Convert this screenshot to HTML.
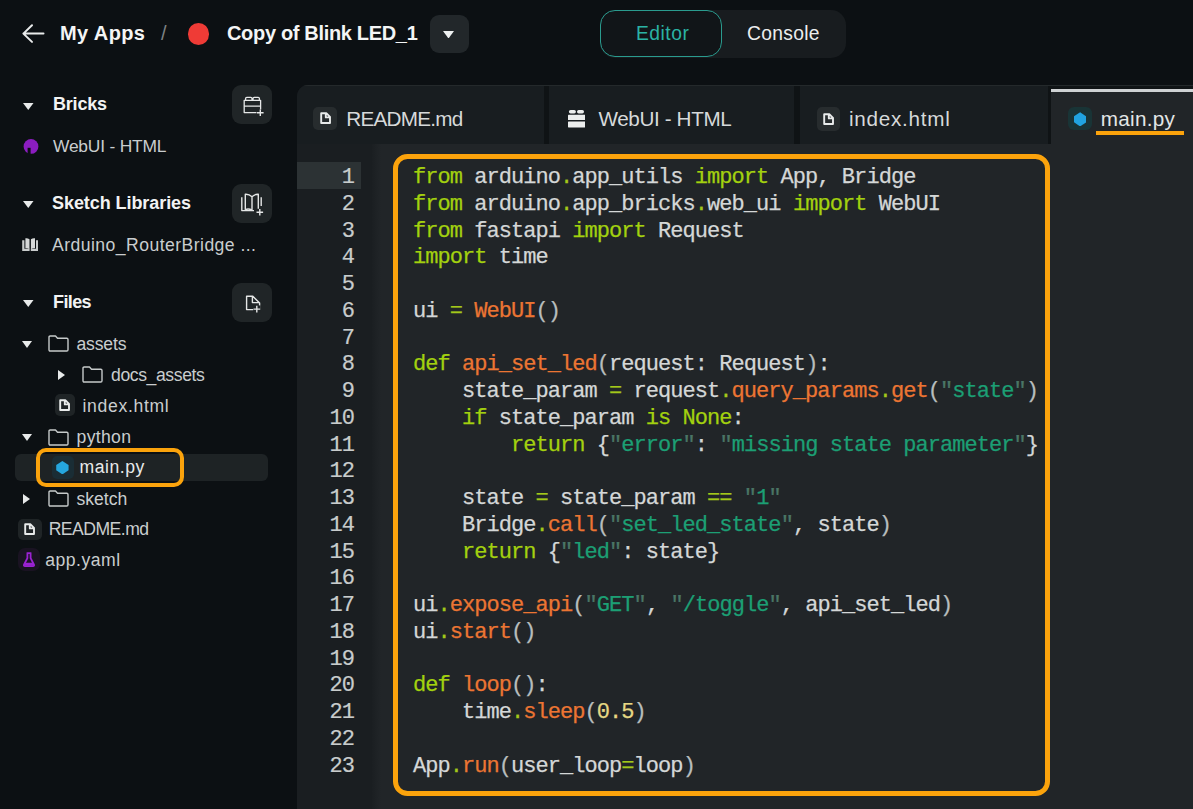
<!DOCTYPE html>
<html><head><meta charset="utf-8">
<style>
*{margin:0;padding:0;box-sizing:border-box}
html,body{width:1193px;height:809px;overflow:hidden;background:#0c1013;font-family:"Liberation Sans",sans-serif;position:relative}
.a{position:absolute;white-space:nowrap}
.btn{position:absolute;width:40px;height:39px;border-radius:9px;background:#202527}
#ed{position:absolute;left:297px;top:85px;width:896px;height:724px;background:#0f1315;border-top-left-radius:11px;overflow:hidden}
.tab{position:absolute;top:0;height:60px;background:#181d20}
#gut{position:absolute;left:0;top:59px;width:75px;bottom:0;background:#1a1e21}
#code{position:absolute;left:75px;top:59px;right:0;bottom:0;background:#212528}
#nums{position:absolute;left:0;top:80px;width:57px;text-align:right;font-family:"Liberation Mono",monospace;font-size:22px;line-height:26.75px;letter-spacing:-0.95px;color:#c8cccc;white-space:pre;-webkit-text-stroke:0.2px currentColor}
#codetxt{position:absolute;left:116px;top:80px;font-family:"Liberation Mono",monospace;font-size:22px;line-height:26.75px;letter-spacing:-0.95px;color:#d4d7d7;white-space:pre;-webkit-text-stroke:0.25px currentColor}
.k{color:#a3d10f}
.f{color:#ec7533}
.s{color:#1c9f74}
.n{color:#e7d884}
.p{color:#b7bdbd}
.o{color:#a3c81a}
.qt{color:#4a7565}
</style></head><body>
<svg class="a" style="left:21px;top:23px" width="24" height="21" viewBox="0 0 24 21"><path d="M22.5 10.6H2.4M11 2.3L2.4 10.6L11 18.9" fill="none" stroke="#e9ebeb" stroke-width="2" stroke-linecap="round" stroke-linejoin="round"/></svg>
<div class="a" style="left:60px;top:22.67px;font-size:20px;line-height:20px;color:#f4f5f5;font-weight:bold;letter-spacing:0.4px;">My Apps</div>
<div class="a" style="left:161px;top:22.67px;font-size:20px;line-height:20px;color:#7d8284;font-weight:normal;letter-spacing:0px;">/</div>
<div class="a" style="left:187.5px;top:23px;width:21.5px;height:21.5px;border-radius:50%;background:#ef3b36"></div>
<div class="a" style="left:227px;top:22.67px;font-size:20px;line-height:20px;color:#f4f5f5;font-weight:bold;letter-spacing:-0.33px;">Copy of Blink LED_1</div>
<div class="a" style="left:430px;top:15px;width:39px;height:38px;border-radius:9px;background:#22272a"></div>
<svg class="a" style="left:443px;top:30.5px" width="11" height="7.5" viewBox="0 0 11 7.5"><path d="M0 0H11L5.5 7.5Z" fill="#eef0f0"/></svg>
<div class="a" style="left:600px;top:10px;width:246px;height:48px;border-radius:15px;background:#181c1f"></div>
<div class="a" style="left:600px;top:10px;width:122px;height:47px;border-radius:15px;border:1.5px solid #2a9b8e;background:#111518"></div>
<div class="a" style="left:636px;top:24.26px;font-size:19.3px;line-height:19.3px;color:#2bb3a4;font-weight:normal;letter-spacing:0.5px;">Editor</div>
<div class="a" style="left:747px;top:24.46px;font-size:19.3px;line-height:19.3px;color:#eceeee;font-weight:normal;letter-spacing:0.3px;">Console</div>
<svg class="a" style="left:23px;top:102.5px" width="10.5" height="7" viewBox="0 0 10.5 7"><path d="M0 0H10.5L5.25 7Z" fill="#e8eaea"/></svg>
<div class="a" style="left:53px;top:95.26px;font-size:18px;line-height:18px;color:#f2f3f3;font-weight:bold;letter-spacing:-0.2px;">Bricks</div>
<div class="btn" style="left:231.5px;top:85px"></div>
<svg class="a" style="left:231.5px;top:85px" width="40" height="39" viewBox="0 0 40 39"><path d="M12.2 15.3H28.6V27.6H12.2Z M12.2 21.2H28.6 M13.6 15.3V13.6Q13.6 12.4 14.8 12.4H18.8Q20 12.4 20 13.6V15.3 M21 15.3V13.6Q21 12.4 22.2 12.4H26.2Q27.4 12.4 27.4 13.6V15.3" fill="none" stroke="#e6e8e8" stroke-width="1.3" stroke-linejoin="round"/><path d="M24.5 24.5H32.5V31.5H24.5Z" fill="#202527"/><path d="M28.3 24.5V31 M25 27.7H31.6" stroke="#e6e8e8" stroke-width="1.4"/></svg>
<svg class="a" style="left:23px;top:139px" width="16" height="15" viewBox="0 0 16 15"><circle cx="8" cy="7.4" r="7.4" fill="#8c1dc0"/><rect x="4.6" y="8.8" width="3" height="6.5" fill="#0c1013"/></svg>
<div class="a" style="left:53px;top:138.07px;font-size:17.4px;line-height:17.4px;color:#c9cdce;font-weight:normal;letter-spacing:-0.2px;">WebUI - HTML</div>
<svg class="a" style="left:23px;top:200.5px" width="10.5" height="7" viewBox="0 0 10.5 7"><path d="M0 0H10.5L5.25 7Z" fill="#e8eaea"/></svg>
<div class="a" style="left:52px;top:194.06px;font-size:18px;line-height:18px;color:#f2f3f3;font-weight:bold;letter-spacing:-0.07px;">Sketch Libraries</div>
<div class="btn" style="left:232px;top:184px"></div>
<svg class="a" style="left:232px;top:184px" width="40" height="40" viewBox="0 0 40 40"><path d="M9.8 13.2V26.6H20M29.2 13.2V22 M13.3 25.6V10.3Q17 10 20 12.8V26.4Q17 24.2 13.3 25.6Z M20 12.8Q23 10 26.3 10.3V24.8" fill="none" stroke="#e4e6e6" stroke-width="1.4" stroke-linejoin="round"/><path d="M20 26.6H22" stroke="#e4e6e6" stroke-width="1.4"/><path d="M27.8 25V31.6 M24.5 28.3H31.1" stroke="#e4e6e6" stroke-width="1.4"/></svg>
<svg class="a" style="left:21.7px;top:238.3px" width="16.4" height="13" viewBox="0 0 16 13"><path d="M0 2.2H2.2V10.8H7.4V13H0Z M16 2.2H13.8V10.8H8.6V13H16Z" fill="#c9cccc"/><path d="M3.2 0.3Q5.5 0 7.3 1.2V11.2Q5.5 10 3.2 10.3Z M8.7 1.2Q10.5 0 12.8 0.3V10.3Q10.5 10 8.7 11.2Z" fill="#d6d8d8"/></svg>
<div class="a" style="left:52px;top:237.40px;font-size:17.6px;line-height:17.6px;color:#c9cdce;font-weight:normal;letter-spacing:0.45px;">Arduino_RouterBridge ...</div>
<svg class="a" style="left:23px;top:299.5px" width="10.5" height="7" viewBox="0 0 10.5 7"><path d="M0 0H10.5L5.25 7Z" fill="#e8eaea"/></svg>
<div class="a" style="left:53px;top:293.36px;font-size:18px;line-height:18px;color:#f2f3f3;font-weight:bold;letter-spacing:-0.6px;">Files</div>
<div class="btn" style="left:231.6px;top:282.5px"></div>
<svg class="a" style="left:231.6px;top:282.5px" width="40" height="39" viewBox="0 0 40 39"><path d="M14.6 13.2H20.8L27.6 20V26.6H14.6Z M20.4 13.2V19.6H27.2" fill="none" stroke="#e4e6e6" stroke-width="1.4" stroke-linejoin="round"/><path d="M21.2 22.4H28.6V30H21.2Z" fill="#202527"/><path d="M24.8 22.8V29.4 M21.5 26.1H28.1" stroke="#e4e6e6" stroke-width="1.4"/></svg>
<svg class="a" style="left:22px;top:340.5px" width="10" height="7" viewBox="0 0 10 7"><path d="M0 0H10L5.0 7Z" fill="#e8eaea"/></svg>
<svg class="a" style="left:47.5px;top:335px" width="21" height="17" viewBox="0 0 21 17"><path d="M1 2.2Q1 1 2.2 1H7.5L9.5 3.2H18.8Q20 3.2 20 4.4V14.8Q20 16 18.8 16H2.2Q1 16 1 14.8Z" fill="none" stroke="#c6caca" stroke-width="1.4" stroke-linejoin="round"/></svg>
<div class="a" style="left:76.4px;top:335.50px;font-size:17.6px;line-height:17.6px;color:#c9cdce;font-weight:normal;letter-spacing:-0.15px;">assets</div>
<svg class="a" style="left:58px;top:370.2px" width="7" height="10" viewBox="0 0 7 10"><path d="M0 0V10L7 5.0Z" fill="#e8eaea"/></svg>
<svg class="a" style="left:81.5px;top:366px" width="21" height="17" viewBox="0 0 21 17"><path d="M1 2.2Q1 1 2.2 1H7.5L9.5 3.2H18.8Q20 3.2 20 4.4V14.8Q20 16 18.8 16H2.2Q1 16 1 14.8Z" fill="none" stroke="#c6caca" stroke-width="1.4" stroke-linejoin="round"/></svg>
<div class="a" style="left:111px;top:366.60px;font-size:17.6px;line-height:17.6px;color:#c9cdce;font-weight:normal;letter-spacing:-0.4px;">docs_assets</div>
<div class="a" style="left:54.8px;top:394.4px;width:20px;height:21.4px;border-radius:5px;background:#1f2426"></div>
<svg class="a" style="left:59.3px;top:399.1px" width="11" height="12" viewBox="0 0 11 12"><path d="M1.2 1.2H6.3L10 4.9V11H1.2Z M5.8 1.2V5.4H10" fill="none" stroke="#e9ebeb" stroke-width="1.9" stroke-linejoin="round"/></svg>
<div class="a" style="left:82.5px;top:397.70px;font-size:17.6px;line-height:17.6px;color:#c9cdce;font-weight:normal;letter-spacing:0.67px;">index.html</div>
<svg class="a" style="left:22px;top:433.5px" width="10" height="7" viewBox="0 0 10 7"><path d="M0 0H10L5.0 7Z" fill="#e8eaea"/></svg>
<svg class="a" style="left:47.5px;top:428.5px" width="21" height="17" viewBox="0 0 21 17"><path d="M1 2.2Q1 1 2.2 1H7.5L9.5 3.2H18.8Q20 3.2 20 4.4V14.8Q20 16 18.8 16H2.2Q1 16 1 14.8Z" fill="none" stroke="#c6caca" stroke-width="1.4" stroke-linejoin="round"/></svg>
<div class="a" style="left:76.6px;top:428.60px;font-size:17.6px;line-height:17.6px;color:#c9cdce;font-weight:normal;letter-spacing:0.3px;">python</div>
<div class="a" style="left:14.7px;top:454px;width:253.5px;height:27.4px;border-radius:6px;background:#1e2325"></div>
<div class="a" style="left:52px;top:456px;width:22px;height:23px;border-radius:5px;background:#1a2d35"></div>
<svg class="a" style="left:56px;top:460.8px" width="12.8" height="13.4" viewBox="0 0 12 13"><path d="M6 0L12 4V9L6 13L0 9V4Z" fill="#25a6de"/></svg>
<div class="a" style="left:79.6px;top:458.70px;font-size:17.6px;line-height:17.6px;color:#e8eaea;font-weight:normal;letter-spacing:0.53px;">main.py</div>
<div class="a" style="left:35.8px;top:447.8px;width:148px;height:39.5px;border-radius:10px;border:4px solid #fba30c"></div>
<svg class="a" style="left:23px;top:494px" width="7" height="10" viewBox="0 0 7 10"><path d="M0 0V10L7 5.0Z" fill="#e8eaea"/></svg>
<svg class="a" style="left:47.5px;top:490px" width="21" height="17" viewBox="0 0 21 17"><path d="M1 2.2Q1 1 2.2 1H7.5L9.5 3.2H18.8Q20 3.2 20 4.4V14.8Q20 16 18.8 16H2.2Q1 16 1 14.8Z" fill="none" stroke="#c6caca" stroke-width="1.4" stroke-linejoin="round"/></svg>
<div class="a" style="left:76.4px;top:490.60px;font-size:17.6px;line-height:17.6px;color:#c9cdce;font-weight:normal;letter-spacing:0px;">sketch</div>
<div class="a" style="left:18.2px;top:518.6px;width:23.5px;height:21.4px;border-radius:5px;background:#1f2426"></div>
<svg class="a" style="left:24.4px;top:523.3px" width="11" height="12" viewBox="0 0 11 12"><path d="M1.2 1.2H6.3L10 4.9V11H1.2Z M5.8 1.2V5.4H10" fill="none" stroke="#e9ebeb" stroke-width="1.9" stroke-linejoin="round"/></svg>
<div class="a" style="left:48.7px;top:521.10px;font-size:17.6px;line-height:17.6px;color:#c9cdce;font-weight:normal;letter-spacing:-0.53px;">README.md</div>
<div class="a" style="left:17.5px;top:548px;width:22px;height:23px;border-radius:7px;background:#1a1322"></div>
<svg class="a" style="left:23px;top:552.3px" width="12" height="15.3" viewBox="0 0 12 15"><path d="M3.6 1H8.4 M4.4 1V6L1 12.6Q0.6 14 2 14H10Q11.4 14 11 12.6L7.6 6V1" fill="none" stroke="#9a22d2" stroke-width="1.8" stroke-linejoin="round"/><path d="M2.2 10.5H9.8L11 13.6H1Z" fill="#9a22d2"/></svg>
<div class="a" style="left:45.2px;top:551.60px;font-size:17.6px;line-height:17.6px;color:#c9cdce;font-weight:normal;letter-spacing:0.51px;">app.yaml</div>
<div id="ed">
<div class="tab" style="left:0;width:247px"></div>
<div class="tab" style="left:252px;width:245px"></div>
<div class="tab" style="left:503px;width:248px"></div>
<div class="tab" style="left:754px;width:142px;background:#212528"></div>
<div class="a" style="left:0;top:0;width:896px;height:1px;background:#24292b"></div>
<div class="a" style="left:754px;top:1px;width:142px;height:3px;background:#101416"></div>
<div class="a" style="left:754px;top:4px;width:142px;height:3px;background:#cfd2d4"></div>
<div class="a" style="left:16.2px;top:21.5px;width:23.8px;height:23.8px;border-radius:5px;background:#272c2e"></div>
<svg class="a" style="left:22.6px;top:27.4px" width="11" height="12" viewBox="0 0 11 12"><path d="M1.2 1.2H6.3L10 4.9V11H1.2Z M5.8 1.2V5.4H10" fill="none" stroke="#e9ebeb" stroke-width="1.9" stroke-linejoin="round"/></svg>
<div class="a" style="left:49.2px;top:23.98px;font-size:20.7px;line-height:20.7px;color:#d6d9da;font-weight:normal;letter-spacing:-0.75px;">README.md</div>
<svg class="a" style="left:270.9px;top:25.3px" width="17.4" height="17.4" viewBox="0 0 17.4 17.4"><rect x="0.9" y="0" width="7" height="3.4" rx="1.7" fill="#eceeee"/><rect x="9" y="0" width="7" height="3.4" rx="1.7" fill="#eceeee"/><rect x="0" y="4.7" width="17.4" height="5.3" rx="0.6" fill="#eceeee"/><rect x="0" y="11.5" width="17.4" height="5.9" rx="0.6" fill="#eceeee"/></svg>
<div class="a" style="left:301.4px;top:23.98px;font-size:20.7px;line-height:20.7px;color:#d6d9da;font-weight:normal;letter-spacing:-0.38px;">WebUI - HTML</div>
<div class="a" style="left:519.5px;top:22px;width:23.5px;height:23.5px;border-radius:5px;background:#272c2e"></div>
<svg class="a" style="left:525.8px;top:27.8px" width="11" height="12" viewBox="0 0 11 12"><path d="M1.2 1.2H6.3L10 4.9V11H1.2Z M5.8 1.2V5.4H10" fill="none" stroke="#e9ebeb" stroke-width="1.9" stroke-linejoin="round"/></svg>
<div class="a" style="left:551.9px;top:23.98px;font-size:20.7px;line-height:20.7px;color:#d6d9da;font-weight:normal;letter-spacing:0.73px;">index.html</div>
<div class="a" style="left:771px;top:22.1px;width:23.7px;height:23.4px;border-radius:6px;background:#193436"></div>
<svg class="a" style="left:776.9px;top:26.5px" width="12.2" height="14.6" viewBox="0 0 12 14"><path d="M6 0L12 4V10L6 14L0 10V4Z" fill="#21a3e0"/></svg>
<div class="a" style="left:803.7px;top:23.98px;font-size:20.7px;line-height:20.7px;color:#e3e6e6;font-weight:normal;letter-spacing:0.3px;">main.py</div>
<div class="a" style="left:798.6px;top:46px;width:88px;height:3.5px;background:#fba30c"></div>
<div id="gut"></div>
<div id="code"></div>
<div class="a" style="left:0;top:77px;width:63.8px;height:27.3px;background:#2c3234"></div>
<div id="nums">1
2
3
4
5
6
7
8
9
10
11
12
13
14
15
16
17
18
19
20
21
22
23</div>
<div id="codetxt"><span class="k">from</span> arduino<span class="o">.</span>app_utils <span class="k">import</span> App, Bridge
<span class="k">from</span> arduino<span class="o">.</span>app_bricks<span class="o">.</span>web_ui <span class="k">import</span> WebUI
<span class="k">from</span> fastapi <span class="k">import</span> Request
<span class="k">import</span> time
 
ui <span class="o">=</span> <span class="f">WebUI</span><span class="p">()</span>
 
<span class="k">def</span> <span class="f">api_set_led</span><span class="p">(</span>request: Request<span class="p">)</span>:
    state_param <span class="o">=</span> request<span class="o">.</span><span class="f">query_params</span><span class="o">.</span><span class="f">get</span><span class="p">(</span><span class="s"><span class="qt">"</span>state<span class="qt">"</span></span><span class="p">)</span>
    <span class="k">if</span> state_param <span class="k">is</span> <span class="k">None</span>:
        <span class="k">return</span> {<span class="s"><span class="qt">"</span>error<span class="qt">"</span></span>: <span class="s"><span class="qt">"</span>missing state parameter<span class="qt">"</span></span>}
 
    state <span class="o">=</span> state_param <span class="o">==</span> <span class="s"><span class="qt">"</span>1<span class="qt">"</span></span>
    Bridge<span class="o">.</span><span class="f">call</span><span class="p">(</span><span class="s"><span class="qt">"</span>set_led_state<span class="qt">"</span></span>, state<span class="p">)</span>
    <span class="k">return</span> {<span class="s"><span class="qt">"</span>led<span class="qt">"</span></span>: state}
 
ui<span class="o">.</span><span class="f">expose_api</span><span class="p">(</span><span class="s"><span class="qt">"</span>GET<span class="qt">"</span></span>, <span class="s"><span class="qt">"</span>/toggle<span class="qt">"</span></span>, api_set_led<span class="p">)</span>
ui<span class="o">.</span><span class="f">start</span><span class="p">()</span>
 
<span class="k">def</span> <span class="f">loop</span><span class="p">()</span>:
    time<span class="o">.</span><span class="f">sleep</span><span class="p">(</span><span class="n">0.5</span><span class="p">)</span>
 
App<span class="o">.</span><span class="f">run</span><span class="p">(</span>user_loop<span class="o">=</span>loop<span class="p">)</span></div>
<div class="a" style="left:75px;top:59px;width:9px;bottom:0;background:linear-gradient(90deg,#1b1f22,#212528)"></div>
<div class="a" style="left:96px;top:69px;width:657.3px;height:641.5px;border:5px solid #fba30c;border-radius:14.5px"></div>
</div>
</body></html>
